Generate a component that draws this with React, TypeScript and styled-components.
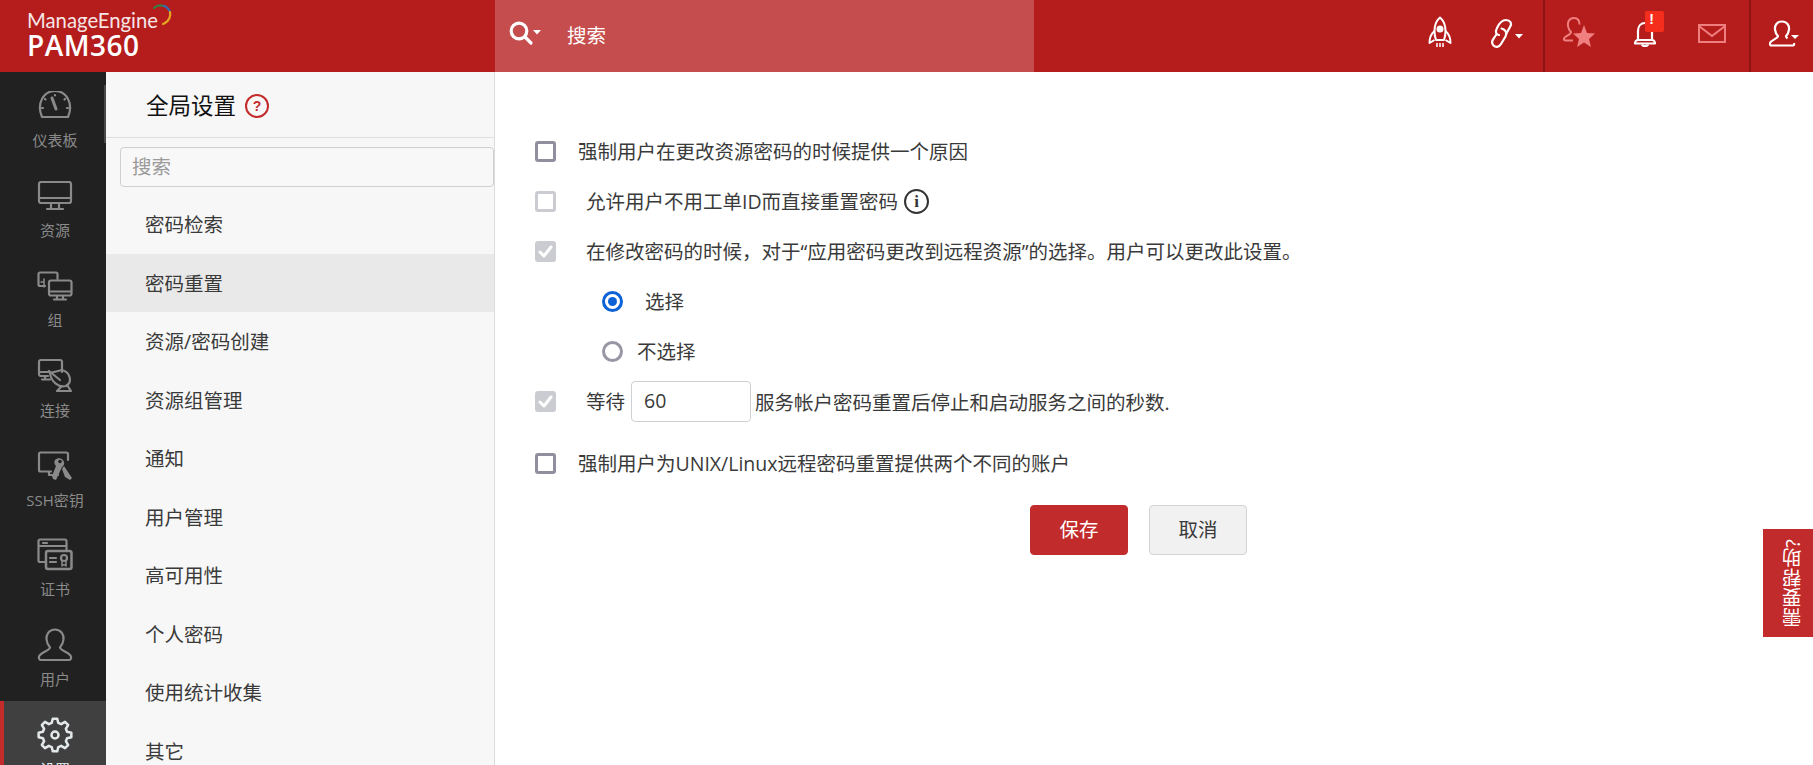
import React from "react";
import styled, { createGlobalStyle } from "styled-components";

const Global = createGlobalStyle`
  html, body { margin: 0; padding: 0; height: 100%; overflow: hidden; background: #fff; }
  body { font-family: "Open Sans", "Noto Sans CJK SC", sans-serif; color: #333; }
  * { box-sizing: border-box; }
`;

const Page = styled.div`
  width: 1813px; height: 765px; display: flex; flex-direction: column; overflow: hidden; position: relative;
`;
const Header = styled.header`
  height: 72px; flex: none; display: flex; background: #b51c1c; color: #fff;
`;
const Brand = styled.div`
  width: 495px; flex: none; padding: 8px 0 0 27px; position: relative;
`;
const BrandTop = styled.div`
  font-family: "Lato", sans-serif; font-size: 20.3px; line-height: 24px; color: #f6e6e6; display: flex; align-items: flex-start;
`;
const BrandName = styled.div`
  font-family: "Open Sans", sans-serif; font-weight: 600; font-size: 28px; line-height: 26px; letter-spacing: 0.5px;
`;
const SearchBar = styled.div`
  width: 539px; flex: none; background: #c64d4d; display: flex; align-items: center; padding: 0 0 4px 14px; font-size: 19.5px;
`;
const SearchLabel = styled.span`
  margin-left: 26px; color: #fff;
`;
const ToolGroup = styled.div<{ $w: number; $border?: boolean }>`
  width: ${p => p.$w}px; flex: none; display: flex; align-items: flex-start; position: relative;
  border-left: ${p => (p.$border ? "2px solid #8f1414" : "none")};
`;
const Spacer = styled.div`flex: 1;`;
const ToolIcon = styled.div<{ $x: number; $y: number; $w: number }>`
  flex: none; width: ${p => p.$w}px; margin-left: ${p => p.$x}px; margin-top: ${p => p.$y}px; position: relative; display: flex;
`;
const Badge = styled.span`
  position: absolute; left: 12px; top: -5px; width: 19px; height: 21px; background: #f52d1d; border-radius: 2px;
  color: #fff; font: 700 14px/17px "Liberation Sans", sans-serif; text-align: center; padding-right: 6px;
`;
const Body = styled.div`
  flex: 1; display: flex; min-height: 0;
`;
const NavRail = styled.nav`
  width: 106px; flex: none; background: #212121; display: flex; flex-direction: column; position: relative;
  &::after { content: ""; position: absolute; left: 104px; top: 13px; width: 2px; height: 58px; background: #4a4a4a; }
`;
const NavItem = styled.div<{ $active?: boolean }>`
  height: 89.9px; flex: none; display: flex; flex-direction: column; align-items: center; padding-top: 19px;
  background: ${p => (p.$active ? "#404040" : "transparent")};
  border-left: ${p => (p.$active ? "4px solid #c42b2b" : "none")};
  padding-left: ${p => (p.$active ? "0" : "4px")};
  color: ${p => (p.$active ? "#e3e8ea" : "#8a8a8a")};
`;
const NavIconBox = styled.div`
  width: 36px; height: 34px; display: flex; align-items: flex-start; justify-content: center;
`;
const NavLabel = styled.span`
  font-size: 15px; line-height: 20px; margin-top: 5px; white-space: nowrap;
`;
const Panel = styled.aside`
  width: 389px; flex: none; background: #f7f7f7; border-right: 1px solid #dcdcdc; display: flex; flex-direction: column;
`;
const PanelHead = styled.div`
  height: 66px; flex: none; border-bottom: 1px solid #dedede; display: flex; align-items: center; padding: 3px 0 0 40px; gap: 9px;
`;
const PanelTitle = styled.h1`
  margin: 0; font-size: 22.5px; font-weight: 400; color: #111; line-height: 30px;
`;
const HelpDot = styled.span`
  width: 24px; height: 24px; border: 2px solid #c42b2b; border-radius: 50%; color: #c42b2b;
  font: 700 14px/20px "Liberation Sans", sans-serif; text-align: center;
`;
const PanelSearch = styled.div`
  height: 40px; flex: none; margin: 9px 0 8px 14px; border: 1px solid #cfcfcf; border-radius: 4px; background: #f8f8f8;
  padding-left: 11px; font-size: 19.5px; line-height: 38px; color: #9a9a9a;
`;
const MenuItem = styled.div<{ $active?: boolean }>`
  height: 58.5px; flex: none; padding: 0 0 1px 39px; font-size: 19.5px; display: flex; align-items: center; color: #3a3a3a;
  background: ${p => (p.$active ? "#e9e9e9" : "transparent")};
`;
const Main = styled.main`
  flex: 1; padding: 54.5px 0 0 40px; position: relative; display: flex; flex-direction: column; font-size: 19.5px; color: #3a3a3a;
`;
const Row = styled.div<{ $indent?: number; $top?: number }>`
  height: 50px; flex: none; display: flex; align-items: center;
  margin-left: ${p => p.$indent || 0}px; margin-top: ${p => p.$top || 0}px;
`;
const Box = styled.span<{ $state: "on" | "off" | "checked" }>`
  width: 21px; height: 21px; flex: none; border-radius: 3px; display: flex; align-items: center; justify-content: center;
  border: 3px solid ${p => (p.$state === "on" ? "#8f8fa0" : "#cbcbd2")};
  background: ${p => (p.$state === "checked" ? "#cbcbd2" : "#fff")};
`;
const Radio = styled.span<{ $on?: boolean }>`
  width: 21px; height: 21px; flex: none; border-radius: 50%; display: flex; align-items: center; justify-content: center;
  border: 3px solid ${p => (p.$on ? "#0b62d6" : "#9696a5")};
  &::after { content: ""; width: 9px; height: 9px; border-radius: 50%; background: ${p => (p.$on ? "#0b62d6" : "transparent")}; }
`;
const RowText = styled.span<{ $gap: number }>`
  margin-left: ${p => p.$gap}px; white-space: nowrap; padding-bottom: 2px;
`;
const InfoDot = styled.span`
  width: 25px; height: 25px; margin-left: 6px; border: 2px solid #333; border-radius: 50%; flex: none;
  font: 700 17px/21px "Liberation Serif", serif; text-align: center; color: #333;
`;
const NumberField = styled.span`
  width: 120px; height: 41px; flex: none; margin: 0 4px 0 6px; border: 1px solid #cfcfd4; border-radius: 4px;
  padding-left: 12px; line-height: 38px; background: #fff;
`;
const Actions = styled.div`
  display: flex; gap: 21px; margin: 16px 0 0 495px;
`;
const Button = styled.span<{ $primary?: boolean }>`
  width: 98px; height: 50px; border-radius: 4px; text-align: center; line-height: 47px; font-size: 19.5px;
  background: ${p => (p.$primary ? "#c22b2b" : "#f1f1f1")};
  color: ${p => (p.$primary ? "#fff" : "#3a3a3a")};
  border: 1px solid ${p => (p.$primary ? "#c22b2b" : "#d4d4d4")};
`;
const HelpTab = styled.div`
  position: absolute; right: 0; top: 529px; width: 50px; height: 108px; background: #c22b2b; color: #fff;
  writing-mode: vertical-rl; transform: rotate(180deg); font-size: 19.8px; line-height: 50px; text-align: center; white-space: nowrap;
  padding-right: 5px;
`;

const gearPath = (() => {
  const cx = 18, cy = 17, teeth = 8, outer = 16.5, inner = 12.5;
  const pts: string[] = [];
  for (let i = 0; i < teeth; i++) {
    const a = (i / teeth) * Math.PI * 2 - Math.PI / 2;
    const s = (Math.PI * 2) / teeth;
    const list: [number, number][] = [
      [inner, a - s * 0.34], [outer, a - s * 0.17], [outer, a + s * 0.17], [inner, a + s * 0.34],
    ];
    list.forEach(([r, t]) => pts.push(`${(cx + r * Math.cos(t)).toFixed(2)} ${(cy + r * Math.sin(t)).toFixed(2)}`));
  }
  return "M" + pts.join("L") + "Z";
})();

const S = { fill: "none", stroke: "currentColor", strokeWidth: 2.2, strokeLinejoin: "round" as const, strokeLinecap: "round" as const };

const Gauge = () => (
  <svg width="36" height="30" viewBox="0 2 36 30" {...S}>
    <path d="M5 28 C-1 14 7 2 18 2 C29 2 37 14 31 28 Z" />
    <path d="M15 9 L19 20" strokeWidth={3} />
    <path d="M18 6v.5M8 10l.5.5M28 10l-.5.5M5 19h1M30 19h1" />
  </svg>
);
const Monitor = () => (
  <svg width="36" height="31" viewBox="0 1 36 31" {...S}>
    <rect x="2" y="2" width="32" height="21" rx="2" />
    <path d="M2 18h32" />
    <path d="M14 24v4M22 24v4M10 29h16" />
  </svg>
);
const Group = () => (
  <svg width="36" height="30" viewBox="0 0 36 30" {...S}>
    <path d="M8 15H3a1.5 1.5 0 0 1-1.5-1.5V3A1.5 1.5 0 0 1 3 1.5h16A1.5 1.5 0 0 1 20.500 3V8" />
    <path d="M7 8v8M4 11h3" strokeWidth={1.5} />
    <rect x="12" y="9.500" width="22.500" height="15" rx="2" />
    <path d="M12 20.500h22M20 25v3M26 25v3M17 28.500h12" />
  </svg>
);
const Connect = () => (
  <svg width="36" height="34" viewBox="0 3 36 34" {...S} style={{ overflow: "visible" }}>
    <path d="M11 18H4a2 2 0 0 1-2-2V4a2 2 0 0 1 2-2h19a2 2 0 0 1 2 2v10" />
    <path d="M2 14h10M8 18v3M5 21.500h8" />
    <path d="M25 12 C33 14 36 24 29 28 C22 30 14 24 13 15 Z" />
    <path d="M12 13l11 9M24 29l-4 4h14l-4-6" />
  </svg>
);
const SshKey = () => (
  <svg width="36" height="31" viewBox="0 0 36 31" {...S}>
    <path d="M31 9V3a1.500 1.500 0 0 0-1.500-1.500H3.500A1.500 1.500 0 0 0 2 3v16a1.500 1.500 0 0 0 1.500 1.500H14" />
    <path d="M12 21v3h9" />
    <path fill="currentColor" stroke="none" d="M18 9c3-3 8-2 9 2 .6 2-.4 4-2 5l-6 13-3-1-1-3 4-10c-2-2-2-4-1-6zM27 15l8 12-2 2-5-3-3-8z" />
    <circle cx="23" cy="10.500" r="1.800" fill="#212121" stroke="none" />
  </svg>
);
const Cert = () => (
  <svg width="36" height="33" viewBox="0 2 36 33" {...S} style={{ overflow: "visible" }}>
    <path d="M8 24H3a1.500 1.500 0 0 1-1.500-1.500V3A1.500 1.500 0 0 1 3 1.500h25A1.500 1.500 0 0 1 29.500 3v9" />
    <path d="M2 8h27M6 5h4" />
    <rect x="9" y="13" width="25.500" height="18" rx="2" strokeWidth={2.500} />
    <path d="M13 20h6M13 24h6" />
    <circle cx="27" cy="20" r="3" />
    <path d="M25 23v5l2-1.500 2 1.500v-5" strokeWidth={1.500} />
  </svg>
);
const Person = () => (
  <svg width="36" height="34" viewBox="0 2 36 34" {...S} style={{ overflow: "visible" }}>
    <path d="M18 1.500c-6 0-9 5-8.500 10 .3 3 1.700 6 3.500 8 0 3-10 5-11 9-.5 2 .5 3.500 2 3.500h28c1.500 0 2.500-1.500 2-3.500-1-4-11-6-11-9 1.800-2 3.200-5 3.500-8 .5-5-2.500-10-8.500-10z" />
  </svg>
);
const Gear = () => (
  <svg width="36" height="34" viewBox="0 2 36 34" {...S} strokeWidth={2.500} style={{ overflow: "visible" }}>
    <path d={gearPath} />
    <circle cx="18" cy="17" r="3.500" />
  </svg>
);
const SearchIcon = () => (
  <svg width="32" height="26" viewBox="0 0 32 26" fill="none" stroke="#fff" strokeWidth="3.200" strokeLinecap="round">
    <circle cx="10" cy="10" r="7.800" />
    <path d="M16 16l6 6" />
    <path d="M24 9h8l-4 4.500z" fill="#fff" stroke="none" />
  </svg>
);
const Rocket = () => (
  <svg width="24" height="32" viewBox="0 0 24 32" fill="none" stroke="#fff" strokeWidth="2" strokeLinejoin="round">
    <path d="M12 1.500C8 5 6.500 10 6.500 15c0 3 .5 6 1.500 9h8c1-3 1.500-6 1.500-9 0-5-1.500-10-5.500-13.500z" />
    <circle cx="12" cy="13" r="2.500" fill="#fff" />
    <path d="M6.500 15C3 18 1.500 21 1.500 27l5-3M17.500 15c3.500 3 5 6 5 12l-5-3" />
    <path d="M9 27v4M12 27v4M15 27v4" strokeWidth="1.500" />
  </svg>
);
const LinkIcon = () => (
  <svg width="38" height="32" viewBox="0 0 38 32" fill="none" stroke="#fff" strokeWidth="2.200" strokeLinecap="round" strokeLinejoin="round">
    <path d="M20 17 L24 10 C26.500 6 24 3 20 3 C16 3 13.500 5.500 11 11 C9 15 10 17.500 13 18" />
    <path d="M15.500 11.500 C19.500 12.500 21.500 16 19.500 19.500 L15 27 C13 30.500 9.500 30.500 7.500 28.500 C5.500 26.500 6 23.500 8 21 L10 18" />
    <path d="M29 17h8l-4 4.500z" fill="#fff" stroke="none" />
  </svg>
);
const UserStar = () => (
  <svg width="32" height="32" viewBox="0 0 32 32" fill="none" stroke="#f08080" strokeWidth="2">
    <path d="M11 2C6 2 4.500 6 5 10c.3 2.500 1.500 4.500 3 6 0 3-6 4-7 6.500-.5 1.500.5 2 2 2h7M11 2c4 0 5.500 3 5.500 6.500" />
    <path d="M21 9l3 8 8 .5-6 5.500 2 8-7-4.500L14 31l2-8-6-5.500 8-.5z" fill="#f08080" stroke="none" />
  </svg>
);
const Bell = () => (
  <svg width="24" height="32" viewBox="0 0 24 32" fill="none" stroke="#fff" strokeWidth="2.200" strokeLinejoin="round">
    <path d="M5 24V15c0-5 3-8 7-8s7 3 7 8v9" />
    <path d="M2 27.500h20c0-2-1.500-3.500-3-3.500H5c-1.500 0-3 1.500-3 3.500z" />
    <path d="M9 28.500c.5 2 5.500 2 6 0" />
  </svg>
);
const Mail = () => (
  <svg width="28" height="20" viewBox="0 0 28 20" fill="none" stroke="#ef7f7f" strokeWidth="2">
    <rect x="1" y="1" width="26" height="17" />
    <path d="M1 2l13 10L27 2" />
  </svg>
);
const UserMenu = () => (
  <svg width="32" height="28" viewBox="0 0 32 28" fill="none" stroke="#fff" strokeWidth="2.200" strokeLinejoin="round">
    <path d="M13 1.500c-5 0-7.500 4-7 8 .3 2.500 1.300 5 3 6.500 0 2.500-7 4-8 7-.4 1.500.4 2.500 1.500 2.500h21c1.200 0 2-1 1.500-2.500M13 1.500c5 0 7.500 4 7 8-.3 2.500-1.300 5-3 6.500 0 1 .5 1.700 1.500 2.500" />
    <path d="M22 15h8l-4 4z" fill="#fff" stroke="none" />
  </svg>
);
const Swirl = () => (
  <svg width="22" height="24" viewBox="0 0 22 24" fill="none" strokeWidth="2.200" strokeLinecap="round" style={{ marginLeft: -5, marginTop: -4 }}>
    <path d="M1 4C4 1 8 1 11 2" stroke="#3a7d44" />
    <path d="M11 2c3 1 5 3 6 6" stroke="#2f6fb0" />
    <path d="M17 8c1 4-1 9-5 11" stroke="#e6a421" />
    <path d="M12 19l-2 1" stroke="#e6a421" />
  </svg>
);
const Tick = () => (
  <svg width="15" height="13" viewBox="0 0 15 13" fill="none" stroke="#fff" strokeWidth="3" strokeLinecap="round" strokeLinejoin="round">
    <path d="M2 7l4 4 7-9" />
  </svg>
);

const navItems: { label: string; icon: React.ReactNode; active?: boolean }[] = [
  { label: "仪表板", icon: <Gauge /> },
  { label: "资源", icon: <Monitor /> },
  { label: "组", icon: <Group /> },
  { label: "连接", icon: <Connect /> },
  { label: "SSH密钥", icon: <SshKey /> },
  { label: "证书", icon: <Cert /> },
  { label: "用户", icon: <Person /> },
  { label: "设置", icon: <Gear />, active: true },
];
const menu = ["密码检索", "密码重置", "资源/密码创建", "资源组管理", "通知", "用户管理", "高可用性", "个人密码", "使用统计收集", "其它"];

export default function App() {
  return (
    <Page>
      <Global />
      <Header>
        <Brand>
          <BrandTop>ManageEngine<Swirl /></BrandTop>
          <BrandName>PAM360</BrandName>
        </Brand>
        <SearchBar>
          <SearchIcon />
          <SearchLabel>搜索</SearchLabel>
        </SearchBar>
        <Spacer />
        <ToolGroup $w={167}>
          <ToolIcon $x={52} $y={16} $w={24}><Rocket /></ToolIcon>
          <ToolIcon $x={34} $y={17} $w={38}><LinkIcon /></ToolIcon>
        </ToolGroup>
        <ToolGroup $w={206} $border>
          <ToolIcon $x={18} $y={16} $w={32}><UserStar /></ToolIcon>
          <ToolIcon $x={38} $y={16} $w={24}><Bell /><Badge>!</Badge></ToolIcon>
          <ToolIcon $x={41} $y={24} $w={28}><Mail /></ToolIcon>
        </ToolGroup>
        <ToolGroup $w={64} $border>
          <ToolIcon $x={18} $y={20} $w={32}><UserMenu /></ToolIcon>
        </ToolGroup>
      </Header>
      <Body>
        <NavRail>
          {navItems.map(n => (
            <NavItem key={n.label} $active={n.active}>
              <NavIconBox>{n.icon}</NavIconBox>
              <NavLabel>{n.label}</NavLabel>
            </NavItem>
          ))}
        </NavRail>
        <Panel>
          <PanelHead>
            <PanelTitle>全局设置</PanelTitle>
            <HelpDot>?</HelpDot>
          </PanelHead>
          <PanelSearch>搜索</PanelSearch>
          {menu.map((m, i) => (
            <MenuItem key={m} $active={i === 1}>{m}</MenuItem>
          ))}
        </Panel>
        <Main>
          <Row>
            <Box $state="on" />
            <RowText $gap={22}>强制用户在更改资源密码的时候提供一个原因</RowText>
          </Row>
          <Row>
            <Box $state="off" />
            <RowText $gap={30}>允许用户不用工单ID而直接重置密码</RowText>
            <InfoDot>i</InfoDot>
          </Row>
          <Row>
            <Box $state="checked"><Tick /></Box>
            <RowText $gap={30}>在修改密码的时候，对于“应用密码更改到远程资源”的选择。用户可以更改此设置。</RowText>
          </Row>
          <Row $indent={67}>
            <Radio $on />
            <RowText $gap={22}>选择</RowText>
          </Row>
          <Row $indent={67}>
            <Radio />
            <RowText $gap={14}>不选择</RowText>
          </Row>
          <Row>
            <Box $state="checked"><Tick /></Box>
            <RowText $gap={30}>等待</RowText>
            <NumberField>60</NumberField>
            <span>服务帐户密码重置后停止和启动服务之间的秒数.</span>
          </Row>
          <Row $top={12}>
            <Box $state="on" />
            <RowText $gap={22}>强制用户为UNIX/Linux远程密码重置提供两个不同的账户</RowText>
          </Row>
          <Actions>
            <Button $primary>保存</Button>
            <Button>取消</Button>
          </Actions>
        </Main>
      </Body>
      <HelpTab>需要帮助?</HelpTab>
    </Page>
  );
}
